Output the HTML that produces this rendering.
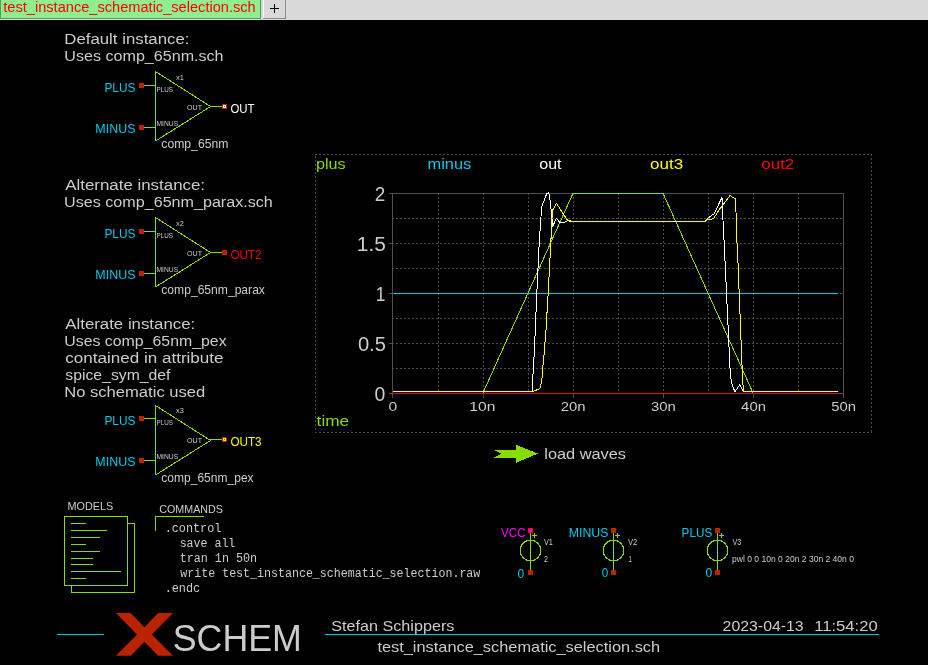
<!DOCTYPE html>
<html><head><meta charset="utf-8"><style>html,body{margin:0;padding:0;background:#000;overflow:hidden}svg{display:block;will-change:transform}</style></head>
<body><svg width="928" height="665" viewBox="0 0 928 665">
<g shape-rendering="crispEdges">
<rect x="0" y="0" width="928" height="20" fill="#d9d9d9"/>
<rect x="0" y="0" width="261" height="19" fill="#4f9f4f"/>
<rect x="1" y="0" width="259" height="18" fill="#90ee90"/>
<rect x="263" y="0" width="23" height="19" fill="#8a8a8a"/>
<rect x="263" y="0" width="22" height="18" fill="#ffffff"/>
<rect x="264" y="0" width="21" height="18" fill="#d9d9d9"/>
<rect x="270" y="8" width="9" height="1" fill="#000"/>
<rect x="274" y="4" width="1" height="9" fill="#000"/>
<g transform="translate(0,0)">
<path d="M155.5 71 V141 M155.5 71.5 L210.5 106.5 L155.5 141 M210 106.5 H222" stroke="#88dd00" fill="none" stroke-width="1"/>
<path d="M144 85.5 H155.5 M144 127.5 H155.5" stroke="#88dd00" fill="none" stroke-width="1"/>
<rect x="139" y="83" width="5" height="5" fill="#bb2200"/>
<rect x="139" y="125" width="5" height="5" fill="#bb2200"/>
<g transform="translate(0,0)">
<rect x="222" y="104" width="5" height="5" fill="#bb2200"/>
<rect x="223" y="105" width="3" height="3" fill="#ffffff"/><rect x="224" y="106" width="1" height="1" fill="#bb2200"/>
</g></g>
<g transform="translate(0,146)">
<path d="M155.5 71 V141 M155.5 71.5 L210.5 106.5 L155.5 141 M210 106.5 H222" stroke="#88dd00" fill="none" stroke-width="1"/>
<path d="M144 85.5 H155.5 M144 127.5 H155.5" stroke="#88dd00" fill="none" stroke-width="1"/>
<rect x="139" y="83" width="5" height="5" fill="#bb2200"/>
<rect x="139" y="125" width="5" height="5" fill="#bb2200"/>
<g transform="translate(0,0)">
<rect x="222" y="104" width="5" height="5" fill="#bb2200"/>
</g></g>
<g transform="translate(0,334)">
<path d="M155.5 71 V141 M155.5 71.5 L210.5 106.5 L155.5 141 M210 105.5 H222" stroke="#88dd00" fill="none" stroke-width="1"/>
<path d="M144 84.5 H155.5 M144 126.5 H155.5" stroke="#88dd00" fill="none" stroke-width="1"/>
<rect x="139" y="82" width="5" height="5" fill="#bb2200"/>
<rect x="139" y="124" width="5" height="5" fill="#bb2200"/>
<g transform="translate(0,-1)">
<rect x="222" y="104" width="5" height="5" fill="#bb2200"/>
<rect x="223" y="105" width="3" height="3" fill="#ffff00"/><rect x="224" y="106" width="1" height="1" fill="#bb2200"/>
</g></g>
<path d="M315 154.5 H872 M315 432.5 H872" stroke="#4a4a4a" stroke-dasharray="2 2" fill="none"/>
<path d="M871.5 154 V433" stroke="#4a4a4a" stroke-dasharray="2 2" fill="none"/>
<path d="M315.5 154 V433" stroke="#4a4a4a" stroke-dasharray="2 2" stroke-dashoffset="2" fill="none"/>
<line x1="438.5" y1="193" x2="438.5" y2="393" stroke="#4a4a4a" stroke-dasharray="2 2" shape-rendering="crispEdges"/>
<line x1="483.5" y1="193" x2="483.5" y2="393" stroke="#4a4a4a" stroke-dasharray="2 2" shape-rendering="crispEdges"/>
<line x1="528.5" y1="193" x2="528.5" y2="393" stroke="#4a4a4a" stroke-dasharray="2 2" shape-rendering="crispEdges"/>
<line x1="573.5" y1="193" x2="573.5" y2="393" stroke="#4a4a4a" stroke-dasharray="2 2" shape-rendering="crispEdges"/>
<line x1="618.5" y1="193" x2="618.5" y2="393" stroke="#4a4a4a" stroke-dasharray="2 2" shape-rendering="crispEdges"/>
<line x1="663.5" y1="193" x2="663.5" y2="393" stroke="#4a4a4a" stroke-dasharray="2 2" shape-rendering="crispEdges"/>
<line x1="708.5" y1="193" x2="708.5" y2="393" stroke="#4a4a4a" stroke-dasharray="2 2" shape-rendering="crispEdges"/>
<line x1="753.5" y1="193" x2="753.5" y2="393" stroke="#4a4a4a" stroke-dasharray="2 2" shape-rendering="crispEdges"/>
<line x1="798.5" y1="193" x2="798.5" y2="393" stroke="#4a4a4a" stroke-dasharray="2 2" shape-rendering="crispEdges"/>
<line x1="392" y1="218.5" x2="843" y2="218.5" stroke="#4a4a4a" stroke-dasharray="2 2" shape-rendering="crispEdges"/>
<line x1="392" y1="243.5" x2="843" y2="243.5" stroke="#4a4a4a" stroke-dasharray="2 2" shape-rendering="crispEdges"/>
<line x1="392" y1="268.5" x2="843" y2="268.5" stroke="#4a4a4a" stroke-dasharray="2 2" shape-rendering="crispEdges"/>
<line x1="392" y1="293.5" x2="843" y2="293.5" stroke="#4a4a4a" stroke-dasharray="2 2" shape-rendering="crispEdges"/>
<line x1="392" y1="318.5" x2="843" y2="318.5" stroke="#4a4a4a" stroke-dasharray="2 2" shape-rendering="crispEdges"/>
<line x1="392" y1="343.5" x2="843" y2="343.5" stroke="#4a4a4a" stroke-dasharray="2 2" shape-rendering="crispEdges"/>
<line x1="392" y1="368.5" x2="843" y2="368.5" stroke="#4a4a4a" stroke-dasharray="2 2" shape-rendering="crispEdges"/>
<rect x="392.5" y="193.5" width="451" height="200" fill="none" stroke="#4e4e4e" shape-rendering="crispEdges"/>
<line x1="389" y1="193.5" x2="392" y2="193.5" stroke="#4e4e4e" shape-rendering="crispEdges"/>
<line x1="389" y1="243.5" x2="392" y2="243.5" stroke="#4e4e4e" shape-rendering="crispEdges"/>
<line x1="389" y1="293.5" x2="392" y2="293.5" stroke="#4e4e4e" shape-rendering="crispEdges"/>
<line x1="389" y1="343.5" x2="392" y2="343.5" stroke="#4e4e4e" shape-rendering="crispEdges"/>
<line x1="389" y1="393.5" x2="392" y2="393.5" stroke="#4e4e4e" shape-rendering="crispEdges"/>
<line x1="392.5" y1="393" x2="392.5" y2="398" stroke="#4e4e4e" shape-rendering="crispEdges"/>
<line x1="483.5" y1="393" x2="483.5" y2="398" stroke="#4e4e4e" shape-rendering="crispEdges"/>
<line x1="573.5" y1="393" x2="573.5" y2="398" stroke="#4e4e4e" shape-rendering="crispEdges"/>
<line x1="663.5" y1="393" x2="663.5" y2="398" stroke="#4e4e4e" shape-rendering="crispEdges"/>
<line x1="753.5" y1="393" x2="753.5" y2="398" stroke="#4e4e4e" shape-rendering="crispEdges"/>
<line x1="843.5" y1="393" x2="843.5" y2="398" stroke="#4e4e4e" shape-rendering="crispEdges"/>
<polyline points="392.5,393.5 482.7,393.5 572.9,193.5 663.1,193.5 753.3,393.5 838.0,393.5" fill="none" stroke="#88dd00" stroke-width="1.0" stroke-linejoin="round"/>
<line x1="392.5" y1="293.5" x2="838" y2="293.5" stroke="#00ccee" shape-rendering="crispEdges"/>
<polyline points="392.5,391.3 532.3,391.3 532.6,381.2 533.8,360.9 534.8,340.6 535.7,320.3 536.5,300.0 539.4,239.1 540.9,218.8 541.5,207.1 546.6,194.0 548.4,192.7 549.8,194.9 550.2,203.9 551.6,213.0 552.5,226.5 556.5,218.4 559.7,222.4 565.0,222.0 567.8,220.6 573.2,222.0 576.8,221.5 705.3,221.5 706.7,219.3 710.7,216.1 713.9,213.9 722.0,197.6 722.5,208.9 723.5,231.4 724.3,245.0 730.1,370.1 731.3,382.2 734.9,392.0 739.8,384.6 743.4,392.0 753.0,391.3 838.0,391.3" fill="none" stroke="#ffffff" stroke-width="1.0" stroke-linejoin="round"/>
<polyline points="392.5,391.3 533.3,391.3 539.8,388.7 541.7,382.0 542.8,367.7 544.0,354.9 545.1,340.6 546.3,327.0 546.9,314.3 547.8,300.0 550.7,244.5 551.7,225.6 552.3,210.7 556.5,203.5 566.9,219.3 569.1,220.6 573.2,221.5 705.3,221.5 706.7,219.7 711.6,219.3 713.9,217.9 719.8,208.9 724.7,202.6 730.1,195.4 732.4,197.2 735.5,199.0 736.0,212.0 736.4,237.7 737.3,245.0 742.2,370.0 743.4,391.3 838.0,391.3" fill="none" stroke="#ffff00" stroke-width="1.0" stroke-linejoin="round"/>
<line x1="392.5" y1="393.5" x2="838" y2="393.5" stroke="#ff0000" shape-rendering="crispEdges"/>
<polygon points="494.5,450 516,450 516,444.8 538,453.5 516,462.8 516,457.5 494.5,457.5 501.3,453.7" fill="#88dd00"/>
<path d="M71.5 585.5 V592.5 H134.5 V523.5 H127.5" fill="none" stroke="#88dd00" shape-rendering="crispEdges"/>
<rect x="64.5" y="516.5" width="63" height="69" fill="none" stroke="#88dd00" shape-rendering="crispEdges"/>
<line x1="71" y1="523.5" x2="86" y2="523.5" stroke="#88dd00" shape-rendering="crispEdges"/>
<line x1="71" y1="530.5" x2="107" y2="530.5" stroke="#88dd00" shape-rendering="crispEdges"/>
<line x1="71" y1="537.5" x2="100" y2="537.5" stroke="#88dd00" shape-rendering="crispEdges"/>
<line x1="71" y1="544.5" x2="86" y2="544.5" stroke="#88dd00" shape-rendering="crispEdges"/>
<line x1="71" y1="551.5" x2="100" y2="551.5" stroke="#88dd00" shape-rendering="crispEdges"/>
<line x1="71" y1="558.5" x2="93" y2="558.5" stroke="#88dd00" shape-rendering="crispEdges"/>
<line x1="71" y1="564.5" x2="93" y2="564.5" stroke="#88dd00" shape-rendering="crispEdges"/>
<line x1="71" y1="571.5" x2="121" y2="571.5" stroke="#88dd00" shape-rendering="crispEdges"/>
<line x1="71" y1="578.5" x2="86" y2="578.5" stroke="#88dd00" shape-rendering="crispEdges"/>
<path d="M155.5 531 V516.5 H204" fill="none" stroke="#88dd00" shape-rendering="crispEdges"/>
<path d="M530.5 530 V572" stroke="#88dd00" shape-rendering="crispEdges"/>
<circle cx="530.5" cy="550.5" r="10.3" fill="none" stroke="#88dd00"/>
<path d="M532 535.5 H537 M534.5 533 V538" stroke="#88dd00" shape-rendering="crispEdges"/>
<rect x="528" y="528" width="5" height="5" fill="#ee1100"/><rect x="529" y="529" width="3" height="3" fill="#ff00ff"/><rect x="530" y="530" width="1" height="1" fill="#ee1100"/>
<rect x="528" y="570" width="5" height="5" fill="#bb2200"/>
<path d="M613.5 530 V572" stroke="#88dd00" shape-rendering="crispEdges"/>
<circle cx="613.5" cy="550.5" r="10.3" fill="none" stroke="#88dd00"/>
<path d="M615 535.5 H620 M617.5 533 V538" stroke="#88dd00" shape-rendering="crispEdges"/>
<rect x="611" y="528" width="5" height="5" fill="#bb2200"/>
<rect x="611" y="570" width="5" height="5" fill="#bb2200"/>
<path d="M717.5 530 V572" stroke="#88dd00" shape-rendering="crispEdges"/>
<circle cx="717.5" cy="550.5" r="10.3" fill="none" stroke="#88dd00"/>
<path d="M719 535.5 H724 M721.5 533 V538" stroke="#88dd00" shape-rendering="crispEdges"/>
<rect x="715" y="528" width="5" height="5" fill="#bb2200"/>
<rect x="715" y="570" width="5" height="5" fill="#bb2200"/>
<line x1="57" y1="634.5" x2="104" y2="634.5" stroke="#00ccee" shape-rendering="crispEdges"/>
<line x1="325" y1="634.5" x2="879" y2="634.5" stroke="#00ccee" shape-rendering="crispEdges"/>
<polygon points="115.9,613.1 130.7,613.1 144.4,627.2 158.1,613.1 173,613.1 151.8,634.4 173,655.7 158.1,655.7 144.4,641.8 130.7,655.7 115.9,655.7 137,634.4" fill="#bb2200" shape-rendering="geometricPrecision"/>
</g>
<text x="3.30" y="12.00" font-family='"Liberation Sans", sans-serif' font-size="15.02" fill="#ff0000" textLength="252.40" lengthAdjust="spacingAndGlyphs" xml:space="preserve">test_instance_schematic_selection.sch</text>
<text x="64.30" y="44.40" font-family='"Liberation Sans", sans-serif' font-size="15.23" fill="#cccccc" textLength="125.12" lengthAdjust="spacingAndGlyphs" xml:space="preserve">Default instance:</text>
<text x="64.34" y="61.30" font-family='"Liberation Sans", sans-serif' font-size="15.23" fill="#cccccc" textLength="159.25" lengthAdjust="spacingAndGlyphs" xml:space="preserve">Uses comp_65nm.sch</text>
<text x="65.20" y="189.60" font-family='"Liberation Sans", sans-serif' font-size="15.23" fill="#cccccc" textLength="139.88" lengthAdjust="spacingAndGlyphs" xml:space="preserve">Alternate instance:</text>
<text x="64.14" y="206.70" font-family='"Liberation Sans", sans-serif' font-size="15.23" fill="#cccccc" textLength="208.66" lengthAdjust="spacingAndGlyphs" xml:space="preserve">Uses comp_65nm_parax.sch</text>
<text x="65.30" y="328.90" font-family='"Liberation Sans", sans-serif' font-size="15.23" fill="#cccccc" textLength="129.86" lengthAdjust="spacingAndGlyphs" xml:space="preserve">Alterate instance:</text>
<text x="64.26" y="346.00" font-family='"Liberation Sans", sans-serif' font-size="15.23" fill="#cccccc" textLength="162.38" lengthAdjust="spacingAndGlyphs" xml:space="preserve">Uses comp_65nm_pex</text>
<text x="65.30" y="363.00" font-family='"Liberation Sans", sans-serif' font-size="15.23" fill="#cccccc" textLength="158.23" lengthAdjust="spacingAndGlyphs" xml:space="preserve">contained in attribute</text>
<text x="65.30" y="379.80" font-family='"Liberation Sans", sans-serif' font-size="15.23" fill="#cccccc" textLength="105.20" lengthAdjust="spacingAndGlyphs" xml:space="preserve">spice_sym_def</text>
<text x="64.21" y="396.60" font-family='"Liberation Sans", sans-serif' font-size="15.23" fill="#cccccc" textLength="141.05" lengthAdjust="spacingAndGlyphs" xml:space="preserve">No schematic used</text>
<text x="104.39" y="92.10" font-family='"Liberation Sans", sans-serif' font-size="13.12" fill="#00ccee" textLength="31.03" lengthAdjust="spacingAndGlyphs" xml:space="preserve">PLUS</text>
<text x="95.35" y="132.70" font-family='"Liberation Sans", sans-serif' font-size="13.12" fill="#00ccee" textLength="40.09" lengthAdjust="spacingAndGlyphs" xml:space="preserve">MINUS</text>
<text x="230.40" y="112.70" font-family='"Liberation Sans", sans-serif' font-size="13.12" fill="#ffffff" textLength="24.11" lengthAdjust="spacingAndGlyphs" xml:space="preserve">OUT</text>
<text x="176.10" y="79.90" font-family='"Liberation Sans", sans-serif' font-size="6.83" fill="#cccccc" textLength="7.82" lengthAdjust="spacingAndGlyphs" xml:space="preserve">x1</text>
<text x="156.50" y="91.70" font-family='"Liberation Sans", sans-serif' font-size="6.83" fill="#cccccc" textLength="16.51" lengthAdjust="spacingAndGlyphs" xml:space="preserve">PLUS</text>
<text x="187.10" y="109.70" font-family='"Liberation Sans", sans-serif' font-size="6.83" fill="#cccccc" textLength="15.01" lengthAdjust="spacingAndGlyphs" xml:space="preserve">OUT</text>
<text x="156.50" y="125.80" font-family='"Liberation Sans", sans-serif' font-size="6.83" fill="#cccccc" textLength="21.65" lengthAdjust="spacingAndGlyphs" xml:space="preserve">MINUS</text>
<text x="161.30" y="147.50" font-family='"Liberation Sans", sans-serif' font-size="12.60" fill="#cccccc" textLength="67.10" lengthAdjust="spacingAndGlyphs" xml:space="preserve">comp_65nm</text>
<text x="104.39" y="238.10" font-family='"Liberation Sans", sans-serif' font-size="13.12" fill="#00ccee" textLength="31.03" lengthAdjust="spacingAndGlyphs" xml:space="preserve">PLUS</text>
<text x="95.35" y="278.70" font-family='"Liberation Sans", sans-serif' font-size="13.12" fill="#00ccee" textLength="40.09" lengthAdjust="spacingAndGlyphs" xml:space="preserve">MINUS</text>
<text x="230.40" y="258.70" font-family='"Liberation Sans", sans-serif' font-size="13.12" fill="#ff0000" textLength="31.07" lengthAdjust="spacingAndGlyphs" xml:space="preserve">OUT2</text>
<text x="176.10" y="225.90" font-family='"Liberation Sans", sans-serif' font-size="6.83" fill="#cccccc" textLength="7.82" lengthAdjust="spacingAndGlyphs" xml:space="preserve">x2</text>
<text x="156.50" y="237.70" font-family='"Liberation Sans", sans-serif' font-size="6.83" fill="#cccccc" textLength="16.51" lengthAdjust="spacingAndGlyphs" xml:space="preserve">PLUS</text>
<text x="187.10" y="255.70" font-family='"Liberation Sans", sans-serif' font-size="6.83" fill="#cccccc" textLength="15.01" lengthAdjust="spacingAndGlyphs" xml:space="preserve">OUT</text>
<text x="156.50" y="271.80" font-family='"Liberation Sans", sans-serif' font-size="6.83" fill="#cccccc" textLength="21.65" lengthAdjust="spacingAndGlyphs" xml:space="preserve">MINUS</text>
<text x="161.30" y="293.50" font-family='"Liberation Sans", sans-serif' font-size="12.60" fill="#cccccc" textLength="103.62" lengthAdjust="spacingAndGlyphs" xml:space="preserve">comp_65nm_parax</text>
<text x="104.39" y="425.20" font-family='"Liberation Sans", sans-serif' font-size="13.12" fill="#00ccee" textLength="31.03" lengthAdjust="spacingAndGlyphs" xml:space="preserve">PLUS</text>
<text x="95.35" y="465.80" font-family='"Liberation Sans", sans-serif' font-size="13.12" fill="#00ccee" textLength="40.09" lengthAdjust="spacingAndGlyphs" xml:space="preserve">MINUS</text>
<text x="230.40" y="445.80" font-family='"Liberation Sans", sans-serif' font-size="13.12" fill="#ffff00" textLength="31.17" lengthAdjust="spacingAndGlyphs" xml:space="preserve">OUT3</text>
<text x="176.10" y="413.00" font-family='"Liberation Sans", sans-serif' font-size="6.83" fill="#cccccc" textLength="7.82" lengthAdjust="spacingAndGlyphs" xml:space="preserve">x3</text>
<text x="156.50" y="424.80" font-family='"Liberation Sans", sans-serif' font-size="6.83" fill="#cccccc" textLength="16.51" lengthAdjust="spacingAndGlyphs" xml:space="preserve">PLUS</text>
<text x="187.10" y="442.80" font-family='"Liberation Sans", sans-serif' font-size="6.83" fill="#cccccc" textLength="15.01" lengthAdjust="spacingAndGlyphs" xml:space="preserve">OUT</text>
<text x="156.50" y="458.90" font-family='"Liberation Sans", sans-serif' font-size="6.83" fill="#cccccc" textLength="21.65" lengthAdjust="spacingAndGlyphs" xml:space="preserve">MINUS</text>
<text x="161.30" y="481.50" font-family='"Liberation Sans", sans-serif' font-size="12.60" fill="#cccccc" textLength="92.34" lengthAdjust="spacingAndGlyphs" xml:space="preserve">comp_65nm_pex</text>
<text x="315.90" y="169.00" font-family='"Liberation Sans", sans-serif' font-size="14.70" fill="#88dd00" textLength="29.65" lengthAdjust="spacingAndGlyphs" xml:space="preserve">plus</text>
<text x="427.58" y="168.80" font-family='"Liberation Sans", sans-serif' font-size="14.70" fill="#00ccee" textLength="43.73" lengthAdjust="spacingAndGlyphs" xml:space="preserve">minus</text>
<text x="539.30" y="168.90" font-family='"Liberation Sans", sans-serif' font-size="14.70" fill="#ffffff" textLength="22.27" lengthAdjust="spacingAndGlyphs" xml:space="preserve">out</text>
<text x="650.00" y="168.90" font-family='"Liberation Sans", sans-serif' font-size="14.70" fill="#ffff00" textLength="33.09" lengthAdjust="spacingAndGlyphs" xml:space="preserve">out3</text>
<text x="761.30" y="168.90" font-family='"Liberation Sans", sans-serif' font-size="14.70" fill="#ff0000" textLength="32.98" lengthAdjust="spacingAndGlyphs" xml:space="preserve">out2</text>
<text x="316.60" y="425.60" font-family='"Liberation Sans", sans-serif' font-size="14.70" fill="#88dd00" textLength="32.58" lengthAdjust="spacingAndGlyphs" xml:space="preserve">time</text>
<text x="374.85" y="201.20" font-family='"Liberation Sans", sans-serif' font-size="19.95" fill="#cccccc" textLength="10.54" lengthAdjust="spacingAndGlyphs" xml:space="preserve">2</text>
<text x="356.85" y="251.00" font-family='"Liberation Sans", sans-serif' font-size="19.95" fill="#cccccc" textLength="29.10" lengthAdjust="spacingAndGlyphs" xml:space="preserve">1.5</text>
<text x="375.63" y="301.00" font-family='"Liberation Sans", sans-serif' font-size="19.95" fill="#cccccc" textLength="9.65" lengthAdjust="spacingAndGlyphs" xml:space="preserve">1</text>
<text x="357.90" y="351.00" font-family='"Liberation Sans", sans-serif' font-size="19.95" fill="#cccccc" textLength="28.03" lengthAdjust="spacingAndGlyphs" xml:space="preserve">0.5</text>
<text x="374.50" y="401.00" font-family='"Liberation Sans", sans-serif' font-size="19.95" fill="#cccccc" textLength="10.79" lengthAdjust="spacingAndGlyphs" xml:space="preserve">0</text>
<text x="388.44" y="411.10" font-family='"Liberation Sans", sans-serif' font-size="13.44" fill="#cccccc" textLength="8.69" lengthAdjust="spacingAndGlyphs" xml:space="preserve">0</text>
<text x="469.35" y="411.10" font-family='"Liberation Sans", sans-serif' font-size="13.44" fill="#cccccc" textLength="26.04" lengthAdjust="spacingAndGlyphs" xml:space="preserve">10n</text>
<text x="560.71" y="411.10" font-family='"Liberation Sans", sans-serif' font-size="13.44" fill="#cccccc" textLength="24.85" lengthAdjust="spacingAndGlyphs" xml:space="preserve">20n</text>
<text x="650.91" y="411.10" font-family='"Liberation Sans", sans-serif' font-size="13.44" fill="#cccccc" textLength="24.85" lengthAdjust="spacingAndGlyphs" xml:space="preserve">30n</text>
<text x="741.11" y="411.10" font-family='"Liberation Sans", sans-serif' font-size="13.44" fill="#cccccc" textLength="24.85" lengthAdjust="spacingAndGlyphs" xml:space="preserve">40n</text>
<text x="831.31" y="411.10" font-family='"Liberation Sans", sans-serif' font-size="13.44" fill="#cccccc" textLength="24.85" lengthAdjust="spacingAndGlyphs" xml:space="preserve">50n</text>
<text x="544.29" y="458.70" font-family='"Liberation Sans", sans-serif' font-size="14.70" fill="#cccccc" textLength="81.74" lengthAdjust="spacingAndGlyphs" xml:space="preserve">load waves</text>
<text x="67.46" y="510.00" font-family='"Liberation Sans", sans-serif' font-size="11.55" fill="#cccccc" textLength="45.72" lengthAdjust="spacingAndGlyphs" xml:space="preserve">MODELS</text>
<text x="159.30" y="513.00" font-family='"Liberation Sans", sans-serif' font-size="11.55" fill="#cccccc" textLength="63.67" lengthAdjust="spacingAndGlyphs" xml:space="preserve">COMMANDS</text>
<text x="164.64" y="531.60" font-family='"Liberation Mono", monospace' font-size="12.41" fill="#cccccc" textLength="56.69" lengthAdjust="spacingAndGlyphs" xml:space="preserve">.control</text>
<text x="179.67" y="546.50" font-family='"Liberation Mono", monospace' font-size="12.41" fill="#cccccc" textLength="55.66" lengthAdjust="spacingAndGlyphs" xml:space="preserve">save all</text>
<text x="179.65" y="561.70" font-family='"Liberation Mono", monospace' font-size="12.41" fill="#cccccc" textLength="77.50" lengthAdjust="spacingAndGlyphs" xml:space="preserve">tran 1n 50n</text>
<text x="180.30" y="576.60" font-family='"Liberation Mono", monospace' font-size="12.41" fill="#cccccc" textLength="300.03" lengthAdjust="spacingAndGlyphs" xml:space="preserve">write test_instance_schematic_selection.raw</text>
<text x="164.63" y="591.50" font-family='"Liberation Mono", monospace' font-size="12.41" fill="#cccccc" textLength="35.59" lengthAdjust="spacingAndGlyphs" xml:space="preserve">.endc</text>
<text x="501.10" y="536.70" font-family='"Liberation Sans", sans-serif' font-size="13.12" fill="#ff00ff" textLength="24.51" lengthAdjust="spacingAndGlyphs" xml:space="preserve">VCC</text>
<text x="544.00" y="544.80" font-family='"Liberation Sans", sans-serif' font-size="8.40" fill="#cccccc" textLength="8.92" lengthAdjust="spacingAndGlyphs" xml:space="preserve">V1</text>
<text x="544.00" y="562.00" font-family='"Liberation Sans", sans-serif' font-size="8.40" fill="#cccccc" textLength="3.92" lengthAdjust="spacingAndGlyphs" xml:space="preserve">2</text>
<text x="517.60" y="577.50" font-family='"Liberation Sans", sans-serif' font-size="13.12" fill="#00ccee" textLength="6.67" lengthAdjust="spacingAndGlyphs" xml:space="preserve">0</text>
<text x="568.76" y="536.90" font-family='"Liberation Sans", sans-serif' font-size="13.12" fill="#00ccee" textLength="39.67" lengthAdjust="spacingAndGlyphs" xml:space="preserve">MINUS</text>
<text x="627.90" y="545.00" font-family='"Liberation Sans", sans-serif' font-size="8.40" fill="#cccccc" textLength="9.33" lengthAdjust="spacingAndGlyphs" xml:space="preserve">V2</text>
<text x="628.40" y="561.80" font-family='"Liberation Sans", sans-serif' font-size="8.40" fill="#cccccc" textLength="3.36" lengthAdjust="spacingAndGlyphs" xml:space="preserve">1</text>
<text x="601.80" y="577.20" font-family='"Liberation Sans", sans-serif' font-size="13.12" fill="#00ccee" textLength="6.46" lengthAdjust="spacingAndGlyphs" xml:space="preserve">0</text>
<text x="681.61" y="536.80" font-family='"Liberation Sans", sans-serif' font-size="13.12" fill="#00ccee" textLength="30.62" lengthAdjust="spacingAndGlyphs" xml:space="preserve">PLUS</text>
<text x="732.50" y="544.80" font-family='"Liberation Sans", sans-serif' font-size="8.40" fill="#cccccc" textLength="8.82" lengthAdjust="spacingAndGlyphs" xml:space="preserve">V3</text>
<text x="732.10" y="561.60" font-family='"Liberation Sans", sans-serif' font-size="8.40" fill="#cccccc" textLength="121.88" lengthAdjust="spacingAndGlyphs" xml:space="preserve">pwl 0 0 10n 0 20n 2 30n 2 40n 0</text>
<text x="705.60" y="577.20" font-family='"Liberation Sans", sans-serif' font-size="13.12" fill="#00ccee" textLength="6.67" lengthAdjust="spacingAndGlyphs" xml:space="preserve">0</text>
<text x="172.75" y="650.70" font-family='"Liberation Sans", sans-serif' font-size="36.75" fill="#cccccc" textLength="129.09" lengthAdjust="spacingAndGlyphs" xml:space="preserve">SCHEM</text>
<text x="331.32" y="631.30" font-family='"Liberation Sans", sans-serif' font-size="14.91" fill="#cccccc" textLength="123.06" lengthAdjust="spacingAndGlyphs" xml:space="preserve">Stefan Schippers</text>
<text x="377.40" y="651.90" font-family='"Liberation Sans", sans-serif' font-size="14.91" fill="#cccccc" textLength="282.75" lengthAdjust="spacingAndGlyphs" xml:space="preserve">test_instance_schematic_selection.sch</text>
<text x="722.60" y="630.90" font-family='"Liberation Sans", sans-serif' font-size="14.91" fill="#cccccc" textLength="81.07" lengthAdjust="spacingAndGlyphs" xml:space="preserve">2023-04-13</text>
<text x="814.18" y="630.90" font-family='"Liberation Sans", sans-serif' font-size="14.91" fill="#cccccc" textLength="63.53" lengthAdjust="spacingAndGlyphs" xml:space="preserve">11:54:20</text>
</svg></body></html>
